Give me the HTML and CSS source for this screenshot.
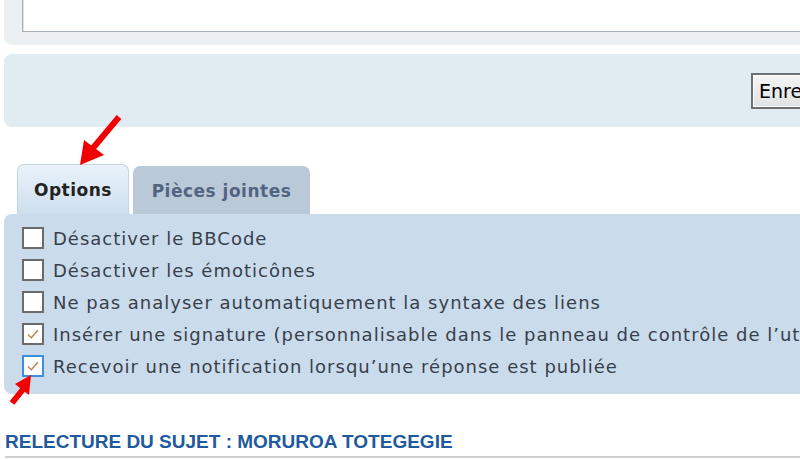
FILE: index.html
```html
<!DOCTYPE html>
<html lang="fr">
<head>
<meta charset="utf-8">
<title>Options</title>
<link rel="stylesheet" href="styles.css">
</head>
<body>
<div class="page">
  <div class="panel panel-editor">
    <div class="editor"></div>
  </div>
  <div class="panel panel-submit">
    <button class="btn" type="button">Enregistrer le brouillon</button>
  </div>

  <ul class="tabs">
    <li class="tab active">Options</li>
    <li class="tab">Pièces jointes</li>
  </ul>
  <div class="panel panel-options">
    <label class="opt"><span class="box"></span>Désactiver le BBCode</label>
    <label class="opt"><span class="box"></span>Désactiver les émoticônes</label>
    <label class="opt"><span class="box"></span>Ne pas analyser automatiquement la syntaxe des liens</label>
    <label class="opt"><span class="box checked"><svg viewBox="0 0 22 22"><path d="M5 11.5 L9 15.5 L17 6.5"/></svg></span>Insérer une signature (personnalisable dans le panneau de contrôle de l’utilisateur)</label>
    <label class="opt"><span class="box checked focus"><svg viewBox="0 0 22 22"><path d="M5 11.5 L9 15.5 L17 6.5"/></svg></span>Recevoir une notification lorsqu’une réponse est publiée</label>
  </div>

  <h3 class="review">RELECTURE DU SUJET : MORUROA TOTEGEGIE</h3>

  <svg class="arrows" viewBox="0 0 800 460" width="800" height="460">
    <line x1="119" y1="117" x2="93" y2="148" class="shaft"/>
    <polygon points="80,165 84,140 104,155" class="head"/>
    <line x1="12" y1="403" x2="24" y2="388" class="shaft"/>
    <polygon points="31,375 15,384 29,395" class="head"/>
  </svg>
</div>
</body>
</html>
```
FILE: styles.css
```css
html, body {
  margin: 0;
  padding: 0;
  background: #ffffff;
}
body {
  width: 800px;
  height: 460px;
  overflow: hidden;
  font-family: "DejaVu Sans", Verdana, sans-serif;
  color: #333;
}
.page {
  position: relative;
  padding-left: 4px;
  width: 796px;
  height: 460px;
  overflow: hidden;
}
.panel {
  margin-right: -30px;
  border-radius: 8px;
}
.panel-editor {
  background: #ecf0f3;
  border-radius: 0 0 8px 8px;
  padding: 0 0 13px 18px;
}
.editor {
  height: 31px;
  background: #fff;
  border: 1px solid #a8b0b8;
  border-top: 0;
  box-shadow: inset 1px 0 0 #e2e2e2;
}
.panel-submit {
  margin-top: 9px;
  height: 73px;
  background: #e1ebf2;
  display: flex;
  align-items: center;
  padding-left: 747px;
  box-sizing: border-box;
  overflow: hidden;
}
.btn {
  flex: none;
  height: 36px;
  padding: 0 8px 0 6px;
  font-family: "DejaVu Sans", Verdana, sans-serif;
  font-size: 19px;
  color: #000;
  background: linear-gradient(#f4f4f4, #e2e2e2);
  border: 2px solid #6f6f6f;
  box-shadow: inset 0 0 0 1px #fdfdfd;
  white-space: nowrap;
}
.tabs {
  list-style: none;
  margin: 37px 0 0 13px;
  padding: 0;
  display: flex;
  align-items: flex-end;
  gap: 4px;
  height: 50px;
}
.tab {
  box-sizing: border-box;
  height: 48px;
  width: 177px;
  text-align: center;
  font-size: 17px;
  letter-spacing: 0.5px;
  font-weight: bold;
  line-height: 50px;
  color: #536482;
  background: #b9c9d7;
  border-radius: 7px 7px 0 0;
}
.tab.active {
  height: 50px;
  line-height: 50px;
  width: 112px;
  color: #222;
  background: linear-gradient(#eaf2fa, #cddfee);
  border: 1px solid #c2d3e3;
  border-bottom: 0;
}
.panel-options {
  background: #cadceb;
  padding: 8px 0 12px 18px;
}
.opt {
  display: flex;
  align-items: center;
  height: 32px;
  font-size: 18px;
  letter-spacing: 1px;
  white-space: nowrap;
  color: #383f4c;
}
.box {
  flex: none;
  box-sizing: border-box;
  width: 22px;
  height: 22px;
  margin-right: 9px;
  background: #fff;
  border: 2px solid #6b6b6b;
  display: flex;
  align-items: center;
  justify-content: center;
}
.box svg {
  width: 18px;
  height: 18px;
}
.box path {
  fill: none;
  stroke: #b58656;
  stroke-width: 1.8;
}
.box.focus {
  border-color: #3c8fd8;
}
.review {
  margin: 37px 0 0 1px;
  padding-bottom: 3px;
  margin-right: -30px;
  border-bottom: 2px solid #cfcfcf;
  font-family: "Liberation Sans Narrow", "Liberation Sans", Arial, sans-serif;
  font-size: 19px;
  font-weight: bold;
  color: #1f5a9e;
  line-height: 22px;
}
.arrows {
  position: absolute;
  left: 0;
  top: 0;
  pointer-events: none;
}
.shaft {
  stroke: #f20000;
  stroke-width: 6;
  stroke-linecap: butt;
}
.head {
  fill: #f20000;
}
```
